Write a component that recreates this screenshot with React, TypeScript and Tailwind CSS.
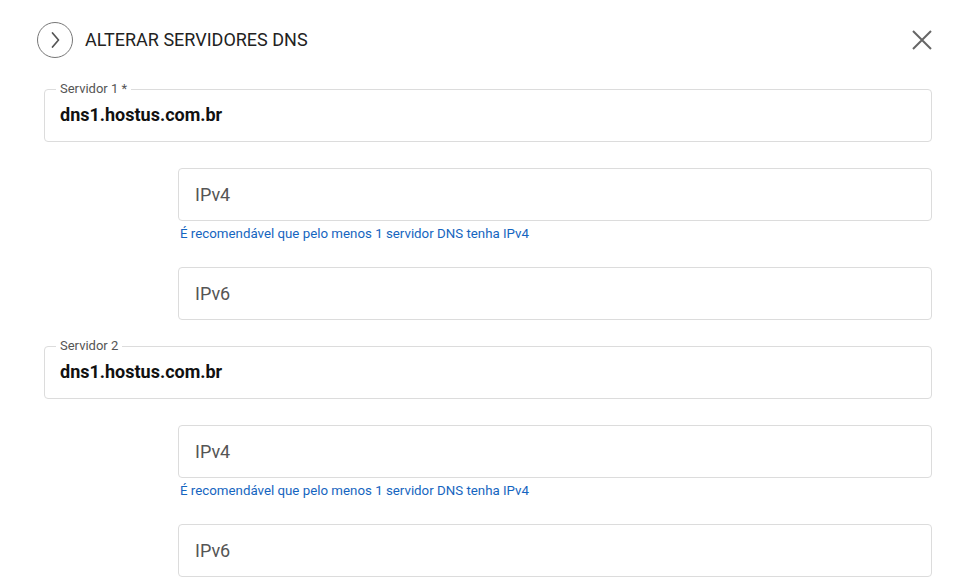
import React from 'react';

const ServerField = ({ label, value }: { label: string; value: string }) => (
	<div className="relative flex h-[53px] items-center rounded-[4px] border border-[#dcdcdc] px-[15px] pb-[3px]">
		<span className="absolute -top-[9px] left-[11px] bg-white px-[4px] text-[13px] leading-[16px] text-[#555]">
			{label}
		</span>
		<span className="text-[18px] font-bold text-[#111]">{value}</span>
	</div>
);

const IpField = ({ placeholder }: { placeholder: string }) => (
	<div className="flex h-[53px] items-center rounded-[4px] border border-[#dcdcdc] px-[16px]">
		<span className="text-[18px] text-[#555]">{placeholder}</span>
	</div>
);

const ServerGroup = ({ label, value }: { label: string; value: string }) => (
	<div>
		<ServerField label={label} value={value} />
		<div className="ml-[134px] mt-[26px]">
			<IpField placeholder="IPv4" />
			<div className="mt-[5px] pl-[2px] text-[13.3px] leading-[16px] text-[#1565c0]">
				É recomendável que pelo menos 1 servidor DNS tenha IPv4
			</div>
			<div className="mt-[25px]">
				<IpField placeholder="IPv6" />
			</div>
		</div>
	</div>
);

export default function App() {
	return (
		<div className="min-h-screen bg-white font-['Roboto',sans-serif]">
			<div className="flex items-center justify-between pl-[37px] pr-[38px] pt-[22px]">
				<div className="flex items-center gap-[12px]">
					<div className="flex h-[36px] w-[36px] items-center justify-center rounded-full border-[1.5px] border-[#777]">
						<svg width="16" height="18" viewBox="0 0 16 18" fill="none">
							<path d="M5.5 2 L11.5 9 L5.5 16" stroke="#555" strokeWidth="1.7" strokeLinecap="round" strokeLinejoin="round" />
						</svg>
					</div>
					<span className="pb-[2px] text-[18px] text-[#222]">ALTERAR SERVIDORES DNS</span>
				</div>
				<svg width="20" height="20" viewBox="0 0 20 20" fill="none">
					<path d="M1 1 L19 19 M19 1 L1 19" stroke="#666" strokeWidth="2" />
				</svg>
			</div>
			<div className="ml-[44px] mr-[38px] mt-[31px] flex flex-col gap-[26px]">
				<ServerGroup label="Servidor 1 *" value="dns1.hostus.com.br" />
				<ServerGroup label="Servidor 2" value="dns1.hostus.com.br" />
			</div>
		</div>
	);
}
